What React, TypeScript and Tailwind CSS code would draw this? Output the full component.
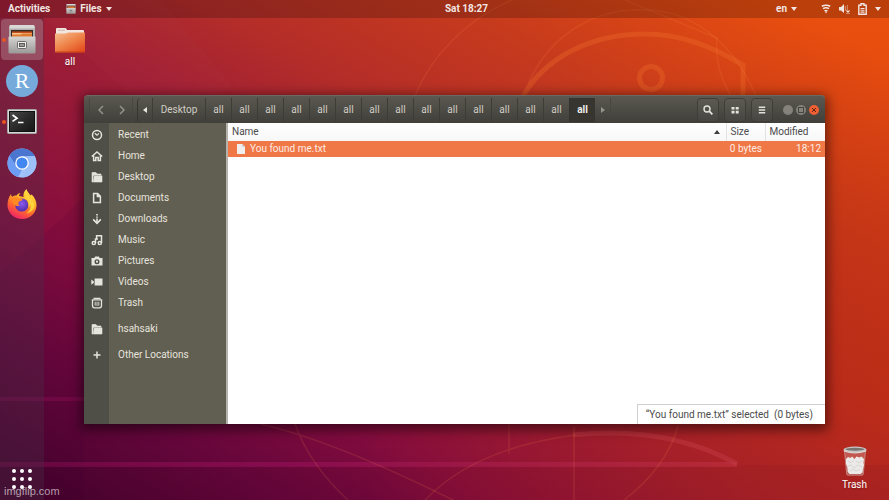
import type { ReactNode } from "react";

const places = [
  { name: "Recent", icon: "recent" },
  { name: "Home", icon: "home" },
  { name: "Desktop", icon: "folder" },
  { name: "Documents", icon: "document" },
  { name: "Downloads", icon: "download" },
  { name: "Music", icon: "music" },
  { name: "Pictures", icon: "camera" },
  { name: "Videos", icon: "video" },
  { name: "Trash", icon: "trash" },
];

const pathDepth = 14;

function PlaceIcon({ name }: { name: string }) {
  const shapes: Record<string, ReactNode> = {
    recent: (
      <g fill="none" stroke="currentColor">
        <circle cx="6" cy="6" r="4.500" strokeWidth="1.500" />
        <path d="M3.8 4.2 6 6.2l2-1.800" strokeWidth="1.200" />
      </g>
    ),
    home: (
      <path
        d="M.8 6.5 6 1.900l5.200 4.600M2.600 5.600v5h2.200V7.600h2.400v3h2.200v-5"
        fill="none"
        stroke="currentColor"
        strokeWidth="1.500"
      />
    ),
    folder: (
      <path
        d="M1 1.5h4l1 1.500h4v1H3.200L2 5v6H1zM3.200 4.800H11V11H2.400z"
        fill="currentColor"
        stroke="currentColor"
        strokeWidth=".6"
      />
    ),
    document: (
      <path
        d="M2.600 1.600h4L9.400 4.400v6H2.600zM6.400 1.600v3h3"
        fill="none"
        stroke="currentColor"
        strokeWidth="1.500"
      />
    ),
    download: (
      <g fill="none" stroke="currentColor" strokeWidth="1.600">
        <path d="M6 1v1.400M6 3.400v1.400M6 5.600v4.600" />
        <path d="m2.200 6.400 3.800 4 3.800-4" />
      </g>
    ),
    music: (
      <g fill="none" stroke="currentColor" strokeWidth="1.500">
        <circle cx="2.800" cy="9" r="1.600" />
        <circle cx="8.800" cy="9" r="1.600" />
        <path d="M4.500 9V5h2.500M5.600 5V1.800h4.900V9" />
      </g>
    ),
    camera: (
      <path
        d="M.5 3h2.700L4.200 1.400h3.600l1 1.600h2.700v7.500H.5zM6 4.200a2.500 2.500 0 1 0 0 5 2.500 2.500 0 0 0 0-5M6 5.600a1.100 1.100 0 1 1 0 2.200 1.100 1.100 0 0 1 0-2.200"
        fill="currentColor"
        fillRule="evenodd"
      />
    ),
    video: <path d="M3.600 2.600H11.500v7H3.600zM.3 3.400l2.600 2v1.400l-2.600 2z" fill="currentColor" />,
    trash: (
      <g fill="none" stroke="currentColor">
        <path d="M2.500 1.300h7M.8 2.900h10.400" strokeWidth="1.200" />
        <path d="M1.500 3v5.500q0 2.300 2 2.300h5q2 0 2-2.300V3" strokeWidth="1.300" />
        <path d="M4.200 4.800v3.900M6 4.800v4.200M7.800 4.800v3.900" strokeWidth=".9" />
      </g>
    ),
    plus: <path d="M6 2.500v7M2.500 6h7" stroke="currentColor" strokeWidth="1.500" />,
  };

  return (
    <svg viewBox="0 0 12 12" className="size-3" aria-hidden="true">
      {shapes[name]}
    </svg>
  );
}

function CabinetIcon({ className }: { className: string }) {
  return (
    <svg viewBox="0 0 28 29" className={className} aria-hidden="true">
      <defs>
        <linearGradient id="cabinet" x2="0" y2="1">
          <stop offset="0" stopColor="#d6d5d3" />
          <stop offset="1" stopColor="#9b9997" />
        </linearGradient>
      </defs>
      <path d="M2 0h24L27 2v13H1V2z" fill="#b3b1af" />
      <path d="M2 0h24l.8 3.500H1.200z" fill="#d9d8d6" />
      <path d="M3 5h22v9H3z" fill="#3a2a22" />
      <path d="M4 6.500h20v2H4z" fill="#c8501e" />
      <path d="M4 8h20v2H4z" fill="#f3c58c" />
      <path d="M4 9.500h9l1-1h10V12H4z" fill="#e07a30" />
      <path d="M.5 12.500q0-1 1-1h25q1 0 1 1V27q0 1.500-1.500 1.500H2Q.5 28.500.5 27z" fill="url(#cabinet)" />
      <rect x="9.500" y="16.500" width="9" height="7" rx="1" fill="#eee" stroke="#6c6a68" strokeWidth="1" />
      <rect x="11.500" y="18.500" width="5" height="3" fill="#999" stroke="#444" strokeWidth=".8" />
    </svg>
  );
}

function TerminalIcon() {
  return (
    <svg viewBox="0 0 30 25" className="h-[25px] w-[30px]" aria-hidden="true">
      <defs>
        <linearGradient id="screen" x2="1" y2="1">
          <stop offset="0" stopColor="#4a4a4a" />
          <stop offset=".5" stopColor="#2b2b2b" />
          <stop offset="1" stopColor="#161616" />
        </linearGradient>
      </defs>
      <rect x=".5" y=".5" width="29" height="24" rx="1" fill="#d8d8d6" stroke="#a5a3a1" />
      <rect x="2.500" y="2.500" width="25" height="20" fill="url(#screen)" stroke="#111" />
      <path d="m5.500 6 4.500 3.200-4.500 3.200M11 13.500h5.500" fill="none" stroke="#fff" strokeWidth="1.700" />
    </svg>
  );
}

function ChromiumIcon() {
  return (
    <svg viewBox="0 0 30 30" className="size-[30px]" aria-hidden="true">
      <circle cx="15" cy="15" r="14.500" fill="#a1c2fa" />
      <path d="M2.440 7.750A14.500 14.500 0 0 1 27.560 7.750L27.800 8.300H15L9.200 18.300z" fill="#4a76cf" />
      <path d="M2.440 7.750 9.200 18.350Q11 21.800 15 21.800L11.200 29A14.500 14.500 0 0 1 2.440 7.750" fill="#6d9df2" />
      <path d="M15 29.500 20.800 18.300Q22 14 19.500 8.300h8.300A14.500 14.500 0 0 1 15 29.500" fill="#9ec0f8" />
      <circle cx="15" cy="15" r="6.800" fill="#fff" />
      <circle cx="15" cy="15" r="5.500" fill="#4286f0" />
    </svg>
  );
}

function FirefoxIcon() {
  return (
    <svg viewBox="0 0 30 30" className="size-[30px]" aria-hidden="true">
      <defs>
        <linearGradient id="flame" x1=".8" y1="0" x2=".3" y2="1">
          <stop offset="0" stopColor="#fff04a" />
          <stop offset=".35" stopColor="#ffb42b" />
          <stop offset=".65" stopColor="#ff6a2c" />
          <stop offset="1" stopColor="#f0206a" />
        </linearGradient>
        <radialGradient id="globe" cx=".5" cy=".4">
          <stop offset="0" stopColor="#8a5cf0" />
          <stop offset="1" stopColor="#5a34b4" />
        </radialGradient>
      </defs>
      <path
        d="M19.500 0c.4 2.500 2.600 4.300 4.200 6.500.5-.2.800-.7.700-1.300C27.500 8 29.500 12 29.500 16A14.500 14 0 0 1 .5 16C.5 12 1.600 8.200 4 5c.1 1.300.5 2.200 1.200 2.800C6.500 6.800 8 6.400 9.500 6.600 10.500 5 12 4.300 13.500 4c-1 1-1.500 2-1.500 3 2 .2 3.500.6 4.500 1.300C16 5 17 2 19.500 0"
        fill="url(#flame)"
      />
      <circle cx="14.800" cy="16" r="6.600" fill="url(#globe)" />
      <path d="M5 9.500c2.500-1.700 5-1.600 7 0 1.500 0 3 .3 3.500 1-.2 1.600-3.600 1.500-4 3.200-.3 1.400.2 2.300 1.200 3-2 .6-3.700.2-5.200-.7C6 15 5 12 5 9.500" fill="#ff8a24" />
      <path d="M16.500 8.500c4 1 6 5 5 9.500 1-.8 1.600-1.800 1.800-3 1.200 3.500-.3 7.500-4 9.300 4.700-.6 8-4 8.200-8.600C26.500 10 20.500 8 19.500 3c-1.500 1.600-2 4-1 6z" fill="#ffd23c" />
    </svg>
  );
}

function FolderIcon() {
  return (
    <svg viewBox="0 0 30 25" className="h-[25px] w-[30px]" aria-hidden="true">
      <defs>
        <linearGradient id="folder" x1=".1" x2=".9" y2="1">
          <stop offset="0" stopColor="#f6b98b" />
          <stop offset=".5" stopColor="#ee8348" />
          <stop offset="1" stopColor="#e4491a" />
        </linearGradient>
      </defs>
      <path d="M1 1q0-1 1-1h8q1 0 1.500 1l.5 1h16q1 0 1 1v6H1z" fill="#f1e6e0" />
      <path d="M3 1.500h7v1.500H3z" fill="#d9c5bb" />
      <path d="M0 5.500h11l2-1h17V23.500q0 1-1 1H1q-1 0-1-1z" fill="url(#folder)" />
      <path d="M.5 24h29" stroke="#c23e14" strokeWidth="1" />
    </svg>
  );
}

function BinIcon() {
  return (
    <svg viewBox="0 0 24 30" className="h-[30px] w-6" aria-hidden="true">
      <path d="M1.500 5h21L20.300 28q-.1 1.200-1.300 1.200H5q-1.200 0-1.300-1.200z" fill="#e8c9c4" fillOpacity=".3" stroke="#cfb3ae" strokeWidth=".6" />
      <path
        d="m3 13 2-2 2.500 1L9 10.500l2.500 2.500 2-2.500 3 1 2-1 2.500 2.500-.5 4 .5 2-1 4-.5 3.500-2 1.500H6.500l-1.800-2-.4-5L3 18z"
        fill="#eceae8"
      />
      <path d="m5 15 3 2 3-3m2 1 3 2 3-2M5 20l3-1 3 3 4-3 4 2M7 25l3-2 3 2 4-2" fill="none" stroke="#cfccca" strokeWidth=".7" />
      <ellipse cx="12" cy="3.500" rx="11.500" ry="3" fill="#c6c4c1" />
      <ellipse cx="12" cy="3.300" rx="9.500" ry="1.500" fill="#77736f" />
      <path d="M.8 4q11 4.500 22.400 0v1.500q-11 4-22.400 0z" fill="#d9d7d4" />
    </svg>
  );
}

function Caret() {
  return (
    <svg viewBox="0 0 6 4" className="h-1 w-1.5" aria-hidden="true">
      <path d="M0 0h6L3 4z" fill="currentColor" />
    </svg>
  );
}

function Wallpaper() {
  return (
    <svg
      viewBox="0 0 889 500"
      preserveAspectRatio="none"
      className="absolute inset-0 -z-10 h-full w-full"
      aria-hidden="true"
    >
      <defs>
        <linearGradient id="band">
          <stop offset="0" stopColor="#a01060" stopOpacity=".3" />
          <stop offset=".4" stopColor="#98105a" stopOpacity=".6" />
          <stop offset="1" stopColor="#c03040" stopOpacity=".6" />
        </linearGradient>
      </defs>
      <path d="M0 465h889v35H0z" fill="#300018" fillOpacity=".06" />
      <path d="M160 0 232 86 170 130 44 18V0z" fill="#fff" fillOpacity=".012" />
      <path d="M0 274 84 198V500H0z" fill="#300030" fillOpacity=".08" />
      <path d="M0 462h737v5H0z" fill="url(#band)" />
      <path d="M0 397h84v4H0z" fill="#a01060" fillOpacity=".3" />
      <path d="M573 435q94-10 164 29" fill="none" stroke="#c23a44" strokeOpacity=".5" strokeWidth="5" />
      <g fill="none" stroke="#f0702c" strokeOpacity=".33">
        <path d="M523 96C545 58 590 34 645 34c36 0 66 12 98 31v31" strokeWidth="5" />
        <circle cx="651" cy="78" r="11.500" strokeWidth="5" />
      </g>
      <g fill="none" stroke="#ff8c50" strokeOpacity=".14" strokeWidth="1.500">
        <path d="M415 96C430 58 465 20 512 0" />
        <path d="M528 84C552 30 600 8 645 10c40 0 85 25 111 86" />
        <path d="M625 0l92 38q-3 30 14 58" />
        <path d="M678 426q-12 42-54 74" />
        <path d="M260 424q72 16 193 76M295 424q14 40 53 76M574 426v74" />
        <path d="M425 500q50-52 150-65M509 424v30" />
      </g>
    </svg>
  );
}

function TopBar() {
  return (
    <header className="grid h-[18px] grid-cols-3 items-center bg-black/20 px-2 text-[10px] font-bold text-[#f2e6e2]">
      <div className="flex items-center gap-4">
        <button>Activities</button>
        <button className="flex items-center gap-1">
          <CabinetIcon className="h-2.5 w-2.5" />
          Files
          <Caret />
        </button>
      </div>
      <time className="justify-self-center pl-11">Sat 18:27</time>
      <div className="flex items-center gap-6 justify-self-end">
        <button className="flex items-center gap-1">
          en
          <Caret />
        </button>
        <button className="flex items-center gap-2" aria-label="System menu">
          <svg viewBox="0 0 10 10" className="size-2.5" aria-hidden="true">
            <path d="M.8 2.200q4.200-2 8.400 0M2 4.700q3-1.700 6 0M3.500 6.900q1.500-.9 3 0" fill="none" stroke="currentColor" strokeWidth="1.500" />
            <path d="M3.800 7.600h2.400L5 9.600z" fill="currentColor" />
          </svg>
          <svg viewBox="0 0 11 10" className="h-2.5 w-[11px]" aria-hidden="true">
            <path d="M0 3h2l3-3v9L2 6.500H0z" fill="currentColor" />
            <path d="M6.300 2v5M8.300 1v5" stroke="currentColor" strokeOpacity=".5" />
            <path d="m7.500 6.500 3 3m0-3-3 3" stroke="currentColor" strokeWidth="1.200" />
          </svg>
          <svg viewBox="0 0 9 12" className="h-3 w-[9px]" aria-hidden="true">
            <path d="M3 .8h3v1.500h2.200v8.900H.8V2.300H3z" fill="none" stroke="currentColor" strokeWidth="1.400" />
            <path d="M2.500 5.500h4M2.500 7.300h4M2.500 9.100h4" stroke="currentColor" strokeWidth="1.100" />
          </svg>
          <Caret />
        </button>
      </div>
    </header>
  );
}

function DockItem({ label, active, running, children }: { label: string; active?: boolean; running?: boolean; children: ReactNode }) {
  return (
    <button
      aria-label={label}
      className={`relative flex h-[41px] w-[42px] items-center justify-center rounded-sm ${active ? "bg-white/20" : ""}`}
    >
      {running && <span className="absolute left-px size-1 rounded-full bg-[#e95420]" />}
      {children}
    </button>
  );
}

function Dock() {
  return (
    <nav className="flex w-11 flex-col items-center bg-[#4a3048]/35 pt-px">
      <DockItem label="Files" active running>
        <CabinetIcon className="h-[29px] w-7" />
      </DockItem>
      <DockItem label="RStudio">
        <span className="flex size-8 items-center justify-center rounded-full bg-[#75aadb] font-['Liberation_Serif',serif] text-[22px] leading-none text-white">
          R
        </span>
      </DockItem>
      <DockItem label="Terminal" running>
        <TerminalIcon />
      </DockItem>
      <DockItem label="Chromium">
        <ChromiumIcon />
      </DockItem>
      <DockItem label="Firefox">
        <FirefoxIcon />
      </DockItem>
      <button className="mt-auto mb-2.5 p-px" aria-label="Show applications">
        <svg viewBox="0 0 20 20" className="size-5" aria-hidden="true">
          {[2, 10, 18].map((y) =>
            [2, 10, 18].map((x) => <circle key={`${x}-${y}`} cx={x} cy={y} r="2" fill="#fff" />),
          )}
        </svg>
      </button>
    </nav>
  );
}

function TitleBar() {
  const toolButton = "flex h-6 w-[22px] items-center justify-center rounded-sm border border-[#3e3d38] bg-white/3";

  return (
    <div className="flex h-7 items-center rounded-t border-t border-[#6b6961] bg-linear-to-b from-[#5a5850] to-[#403f3a] pr-[6px] pl-[5px] text-[#d0cdc4]">
      <div className="mr-1 flex h-6 w-11 items-center justify-around border-x border-[#48463f] text-[#96938a]">
        <button aria-label="Back">
          <svg viewBox="0 0 6 10" className="h-2.5 w-1.5" aria-hidden="true">
            <path d="M5 1 1 5l4 4" fill="none" stroke="currentColor" strokeWidth="1.500" />
          </svg>
        </button>
        <button aria-label="Forward">
          <svg viewBox="0 0 6 10" className="h-2.5 w-1.5" aria-hidden="true">
            <path d="m1 1 4 4-4 4" fill="none" stroke="currentColor" strokeWidth="1.500" />
          </svg>
        </button>
      </div>
      <nav className="flex h-6 items-stretch rounded-sm border-l border-[#37362f]">
        <button className="flex w-[14px] items-center justify-center" aria-label="Scroll path left">
          <svg viewBox="0 0 4 6" className="h-1.5 w-1" aria-hidden="true">
            <path d="M4 0v6L0 3z" fill="#e8e6e0" />
          </svg>
        </button>
        <button className="w-[53px] border-l border-[#3d3c36]">Desktop</button>
        {Array.from({ length: pathDepth }, (_, i) => (
          <button key={i} className="w-[26px] border-l border-[#3d3c36]">
            all
          </button>
        ))}
        <button className="w-[26px] border-l border-[#33322d] bg-[#363530] font-bold text-[#f0eeea]">all</button>
        <button
          className="flex w-4 items-center justify-center border-r border-[#48463f] text-[#96938a]"
          aria-label="Scroll path right"
        >
          <svg viewBox="0 0 4 6" className="h-1.5 w-1" aria-hidden="true">
            <path d="M0 0v6l4-3z" fill="currentColor" />
          </svg>
        </button>
      </nav>
      <div className="ml-auto flex gap-[5px] text-[#e4e2dc]">
        <button className={toolButton} aria-label="Search">
          <svg viewBox="0 0 10 10" className="size-2.5" aria-hidden="true">
            <circle cx="4" cy="4" r="3" fill="none" stroke="currentColor" strokeWidth="1.400" />
            <path d="m6.200 6.200 3.200 3.200" stroke="currentColor" strokeWidth="1.800" />
          </svg>
        </button>
        <button className={toolButton} aria-label="Grid view">
          <svg viewBox="0 0 8 8" className="size-2" aria-hidden="true">
            <path d="M.5 1h3v2.600h-3zM4.700 1h3v2.600h-3zM.5 4.800h3v2.600h-3zM4.700 4.800h3v2.600h-3z" fill="currentColor" />
          </svg>
        </button>
        <button className={toolButton} aria-label="Menu">
          <svg viewBox="0 0 8 8" className="size-2" aria-hidden="true">
            <path d="M.8 1.300h6.400M.8 4h6.400M.8 6.700h6.400" stroke="currentColor" strokeWidth="1.400" />
          </svg>
        </button>
      </div>
      <div className="ml-2.5 flex gap-[3px]">
        <button className="size-2.5 rounded-full bg-[#84827b]" aria-label="Minimize" />
        <button className="flex size-2.5 items-center justify-center rounded-full bg-[#84827b]" aria-label="Maximize">
          <span className="size-1.5 border border-[#45443e]" />
        </button>
        <button className="flex size-2.5 items-center justify-center rounded-full bg-[#ee6033]" aria-label="Close">
          <svg viewBox="0 0 4 4" className="size-1" aria-hidden="true">
            <path d="m0 0 4 4m0-4L0 4" stroke="#5c2410" strokeWidth="1" />
          </svg>
        </button>
      </div>
    </div>
  );
}

function Place({ name, icon }: { name: string; icon: string }) {
  return (
    <a href="#" className="flex h-[21px] items-center text-[#e6e4dd]">
      <span className="flex w-[25px] justify-center">
        <PlaceIcon name={icon} />
      </span>
      <span className="pl-[9px]">{name}</span>
    </a>
  );
}

function FilesWindow() {
  return (
    <section className="flex flex-1 flex-col rounded-t text-[10px] shadow-[0_3px_12px_3px_rgba(0,0,0,0.5)]">
      <TitleBar />
      <div className="flex flex-1">
        <aside className="w-36 border-r-2 border-[#b4b2aa] bg-linear-to-r from-[#4f4f47] from-[25px] to-[#615e52] to-[25px] pt-px">
          {places.map((place) => (
            <Place key={place.name} {...place} />
          ))}
          <div className="mt-[5px]">
            <Place name="hsahsaki" icon="folder" />
          </div>
          <div className="mt-[5px]">
            <Place name="Other Locations" icon="plus" />
          </div>
        </aside>
        <div className="flex flex-1 flex-col bg-white">
          <table className="w-full table-fixed border-collapse text-left text-[#4b4b4b]">
            <thead>
              <tr className="h-[18px] bg-linear-to-b from-white to-[#f7f7f7]">
                <th className="px-1 py-0 font-normal">
                  <div className="flex items-center justify-between">
                    Name
                    <svg viewBox="0 0 6 4" className="mr-0.5 h-1 w-1.5" aria-hidden="true">
                      <path d="M0 4h6L3 0z" fill="#3c3c3c" />
                    </svg>
                  </div>
                </th>
                <th className="w-[39px] border-l border-[#e2e2e2] px-1 py-0 font-normal">Size</th>
                <th className="w-[60px] border-l border-[#e2e2e2] px-1 py-0 font-normal">Modified</th>
              </tr>
            </thead>
            <tbody>
              <tr className="h-4 bg-[#f07746] text-[#fdece4]">
                <td className="p-0 pl-2">
                  <div className="flex items-center gap-1">
                    <svg viewBox="0 0 10 10" className="size-2.5" aria-hidden="true">
                      <path d="M1 0h5.500L9 2.500V10H1z" fill="#f1efed" />
                      <path d="M6.500 0v2.500H9z" fill="#b9b5b1" />
                    </svg>
                    You found me.txt
                  </div>
                </td>
                <td className="p-0 pr-[3px] text-right whitespace-nowrap">0 bytes</td>
                <td className="p-0 pr-1 text-right">18:12</td>
              </tr>
            </tbody>
          </table>
          <p className="mt-auto flex h-5 items-center self-end border-t border-l border-[#cfcfcf] pr-3 pl-2 whitespace-pre text-[#4b4b4b]">
            “You found me.txt” selected  (0 bytes)
          </p>
        </div>
      </div>
    </section>
  );
}

export default function App() {
  return (
    <div className="relative isolate flex h-screen flex-col overflow-hidden bg-[radial-gradient(ellipse_60%_75%_at_100%_80%,rgba(195,45,10,0.6),rgba(195,45,10,0)),linear-gradient(to_top_right,#40022b_0%,#65063b_16%,#840c3e_28%,#a01f36_50%,#b52e28_62%,#c63a1d_75%,#e94f0e_94%)] font-[Roboto,sans-serif] leading-none">
      <Wallpaper />
      <TopBar />
      <div className="flex flex-1">
        <Dock />
        <main className="relative flex flex-1 pt-[77px] pr-16 pb-[76px] pl-10 text-[10px] text-white">
          <button className="absolute top-[10px] left-[11px] flex flex-col items-center gap-1">
            <FolderIcon />
            <span className="text-shadow-sm">all</span>
          </button>
          <FilesWindow />
          <button className="absolute right-[22px] bottom-2.5 flex flex-col items-center gap-1">
            <BinIcon />
            <span className="text-shadow-sm">Trash</span>
          </button>
        </main>
      </div>
      <span className="absolute bottom-[3px] left-1 font-['Liberation_Sans',sans-serif] text-[11px] text-white/60">
        imgflip.com
      </span>
    </div>
  );
}
